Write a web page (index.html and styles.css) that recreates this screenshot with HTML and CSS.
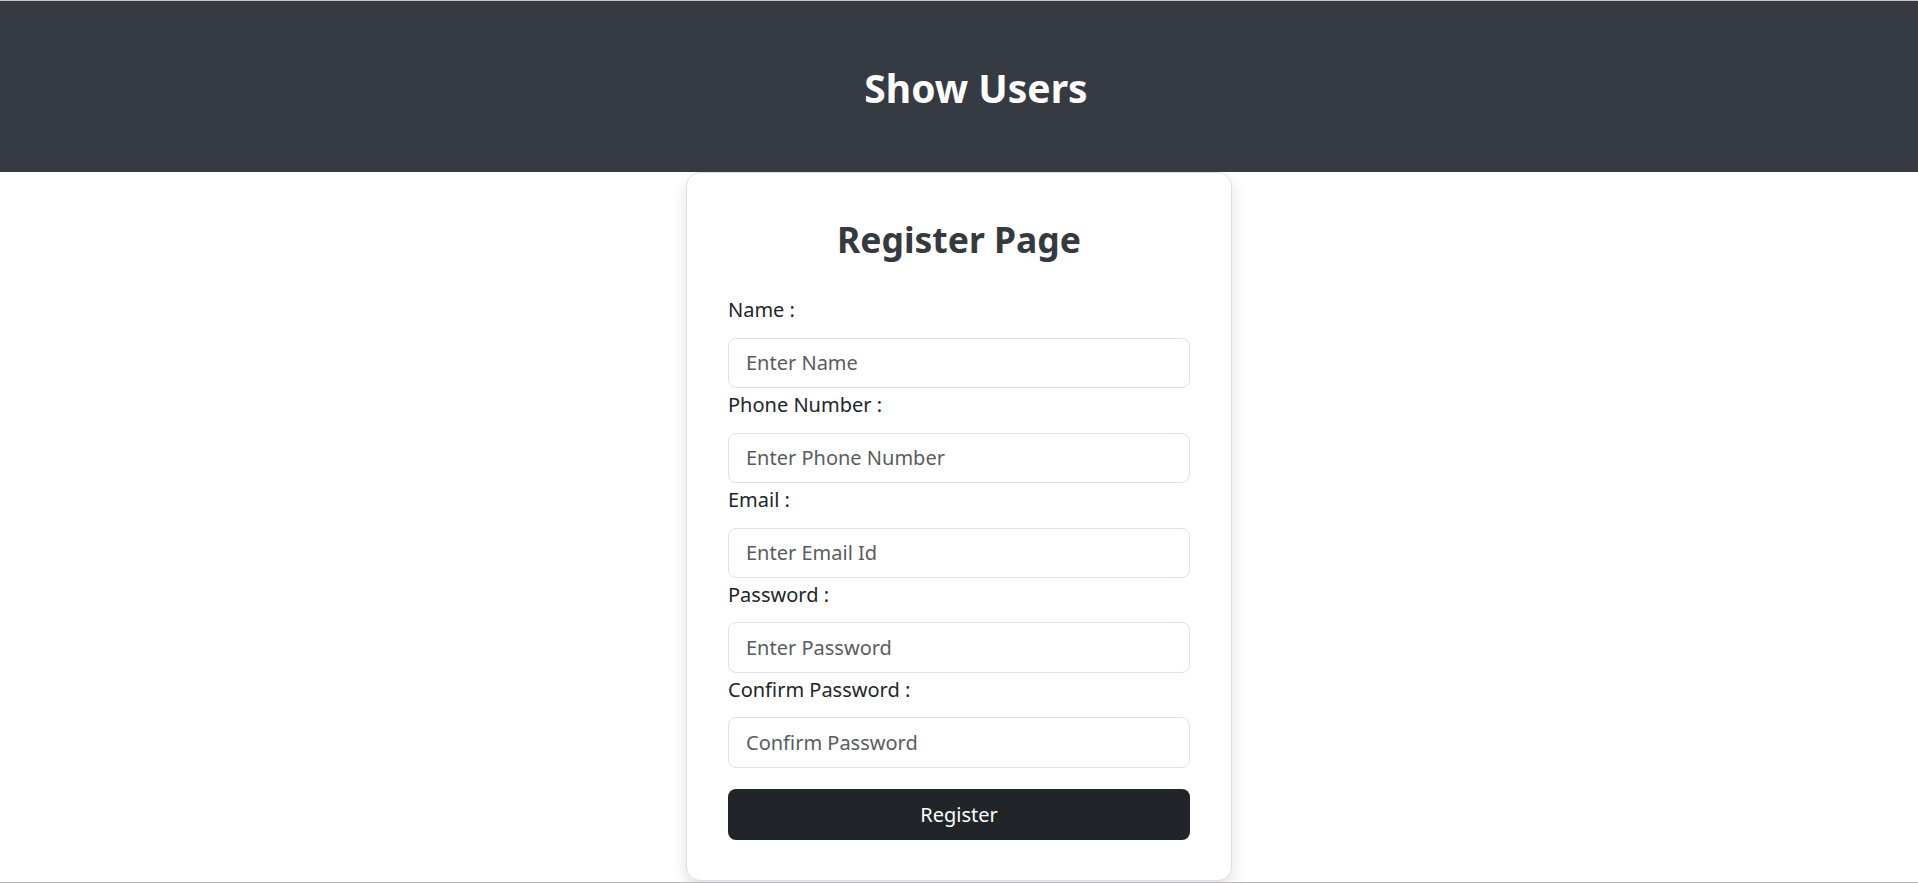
FILE: index.html
```html
<!DOCTYPE html>
<html lang="en">
<head>
<meta charset="utf-8">
<title>Register</title>
<link rel="stylesheet" href="styles.css">
</head>
<body>
<div class="page">
  <header class="topbar">
    <h1 class="topbar-title">Show Users</h1>
  </header>
  <main class="card">
    <h2 class="card-title">Register Page</h2>
    <form class="form">
      <div class="field">
        <label class="label" for="name">Name :</label>
        <input class="input" id="name" type="text" placeholder="Enter Name">
      </div>
      <div class="field">
        <label class="label" for="phone">Phone Number :</label>
        <input class="input" id="phone" type="text" placeholder="Enter Phone Number">
      </div>
      <div class="field">
        <label class="label" for="email">Email :</label>
        <input class="input" id="email" type="email" placeholder="Enter Email Id">
      </div>
      <div class="field">
        <label class="label" for="pw">Password :</label>
        <input class="input" id="pw" type="password" placeholder="Enter Password">
      </div>
      <div class="field">
        <label class="label" for="cpw">Confirm Password :</label>
        <input class="input" id="cpw" type="password" placeholder="Confirm Password">
      </div>
      <button class="btn" type="button">Register</button>
    </form>
  </main>
</div>
</body>
</html>
```
FILE: styles.css
```css
* { box-sizing: border-box; }
html, body { margin: 0; padding: 0; background: #fff; }
body {
  font-family: "Noto Sans", "Open Sans", sans-serif;
  color: #212529;
}
.page {
  height: 883px;
  border-top: 1px solid #c4c4c4;
  border-bottom: 1px solid #bdb6b9;
  display: flex;
  flex-direction: column;
  overflow: hidden;
}
.topbar {
  height: 171px;
  flex: 0 0 171px;
  background: #363a42;
  display: flex;
  align-items: center;
  justify-content: center;
}
.topbar-title {
  margin: 0;
  padding-top: 4px;
  padding-left: 34px;
  color: #fff;
  font-size: 39px;
  font-weight: 700;
  line-height: 1.2;
}
.card {
  width: 546px;
  margin: 0 auto;
  border: 1px solid #dcdfe4;
  border-radius: 14px;
  box-shadow: 0 0.5rem 1rem rgba(0, 0, 0, 0.12);
  padding: 0 41px 40px;
  background: #fff;
}
.card-title {
  margin: 43.2px 0 0;
  text-align: center;
  color: #343a40;
  font-size: 35.5px;
  font-weight: 700;
  line-height: 46px;
}
.form { display: flex; flex-direction: column; margin-top: 33px; }
.field { display: flex; flex-direction: column; }
.label {
  display: block;
  font-size: 20px;
  line-height: 30px;
  margin: 2.2px 0 12.4px;
}
.field:first-child .label { margin-top: 0; }
.input {
  width: 100%;
  height: 50.4px;
  border: 1px solid #dee2e6;
  border-radius: 8px;
  padding: 0 17px;
  font-family: inherit;
  font-size: 20px;
  color: #212529;
  background: #fff;
  outline: none;
}
.input::placeholder { color: #595c5f; }
.btn {
  margin-top: 21.3px;
  height: 50.7px;
  width: 100%;
  border: none;
  border-radius: 8px;
  background: #212529;
  color: #fff;
  font-family: inherit;
  font-size: 20px;
}
```
